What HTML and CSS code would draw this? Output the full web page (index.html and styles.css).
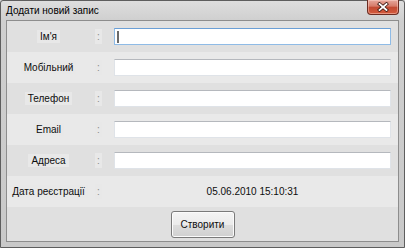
FILE: index.html
```html
<!DOCTYPE html>
<html lang="uk">
<head>
    <meta charset="UTF-8">
    <title>Додати новий запис</title>
    <link rel="stylesheet" href="styles.css">
</head>
<body>
    <div class="window">
        <div class="titlebar">
            <span class="title">Додати новий запис</span>
            <div class="close">
                <svg width="12" height="10" viewBox="0 0 12 10">
                    <path d="M2.5 2 L9.5 8 M9.5 2 L2.5 8" stroke="#3b1a14" stroke-width="3.4" stroke-linecap="square"/>
                    <path d="M2.5 2 L9.5 8 M9.5 2 L2.5 8" stroke="#ffffff" stroke-width="1.8" stroke-linecap="square"/>
                </svg>
            </div>
        </div>

        <div class="client">
            <div class="row dark">
                <div class="label"><span>Ім'я</span></div>
                <div class="colon"><span>:</span></div>
                <div class="field"><div class="textbox focused"><span class="caret"></span></div></div>
            </div>
            <div class="row">
                <div class="label"><span>Мобільний</span></div>
                <div class="colon"><span>:</span></div>
                <div class="field"><div class="textbox"></div></div>
            </div>
            <div class="row dark">
                <div class="label"><span>Телефон</span></div>
                <div class="colon"><span>:</span></div>
                <div class="field"><div class="textbox"></div></div>
            </div>
            <div class="row">
                <div class="label"><span>Email</span></div>
                <div class="colon"><span>:</span></div>
                <div class="field"><div class="textbox"></div></div>
            </div>
            <div class="row dark">
                <div class="label"><span>Адреса</span></div>
                <div class="colon"><span>:</span></div>
                <div class="field"><div class="textbox"></div></div>
            </div>
            <div class="row">
                <div class="label"><span>Дата реєстрації</span></div>
                <div class="colon"><span>:</span></div>
                <div class="field date">05.06.2010 15:10:31</div>
            </div>
            <div class="row dark buttons">
                <button class="btn">Створити</button>
            </div>
        </div>
    </div>
</body>
</html>
```

FILE: styles.css
```css
* {
    margin: 0;
    padding: 0;
    box-sizing: border-box;
}

body {
    font-family: "Liberation Sans", Arial, sans-serif;
    font-size: 10px;
    color: #0d0d0d;
    background: #d4d4d4;
}

/* Window frame */
.window {
    width: 405px;
    height: 248px;
    border: 1px solid #5e5e5e;
    border-radius: 3px 3px 0 0;
    background: linear-gradient(#dedede, #cfcfcf 20px, #c9c9c9);
    padding: 0 5px 5px 5px;
    display: flex;
    flex-direction: column;
}

.titlebar {
    height: 19px;
    display: flex;
    justify-content: space-between;
    align-items: flex-start;
}

.title {
    padding-top: 4px;
    font-size: 10px;
    color: #000;
}

.close {
    width: 32px;
    height: 15px;
    margin-top: -1px;
    border: 1px solid #6b2c22;
    border-top: none;
    border-radius: 0 0 4px 4px;
    background: linear-gradient(#e6a89c, #d67a68 45%, #c24a32 50%, #d45a3c 100%);
    box-shadow: inset 0 0 0 1px rgba(255, 220, 210, 0.45);
    display: flex;
    align-items: center;
    justify-content: center;
}

/* Client area */
.client {
    flex: 1;
    border: 1px solid #8d8d8d;
    background: #e9e9e9;
    display: flex;
    flex-direction: column;
}

.row {
    height: 31px;
    display: grid;
    grid-template-columns: 83px 17px 1fr;
    align-items: center;
    background: #e9e9e9;
}

.row.dark {
    background: #e0e0e0;
}

.label {
    text-align: center;
}

.label span,
.colon span {
    background: #e8e8e8;
    line-height: 13px;
    padding: 0 3px;
    display: inline-block;
}

.colon {
    text-align: center;
}

.colon span {
    color: #8a8a8a;
    padding: 1px 2px;
}

.field {
    padding: 0 7px;
}

.textbox {
    height: 17px;
    background: #fff;
    border: 1px solid #dfe3e8;
    border-top-color: #b5b8bd;
    display: flex;
    align-items: center;
    padding-left: 2px;
}

.textbox.focused {
    border-color: #8fbbe6;
    border-top-color: #6a9fd6;
}

.caret {
    width: 2px;
    height: 12px;
    background: #6a6a6a;
}

.date {
    text-align: center;
}

.buttons {
    height: 34px;
    display: flex;
    justify-content: center;
    align-items: center;
}

.btn {
    width: 64px;
    height: 27px;
    font-family: "Liberation Sans", Arial, sans-serif;
    font-size: 10px;
    color: #0d0d0d;
    border: 1px solid #7a7a7a;
    border-radius: 3px;
    background: linear-gradient(#f4f4f4, #ebebeb 50%, #dddddd 51%, #d0d0d0);
    box-shadow: inset 0 0 0 1px #fbfbfb;
}
```
